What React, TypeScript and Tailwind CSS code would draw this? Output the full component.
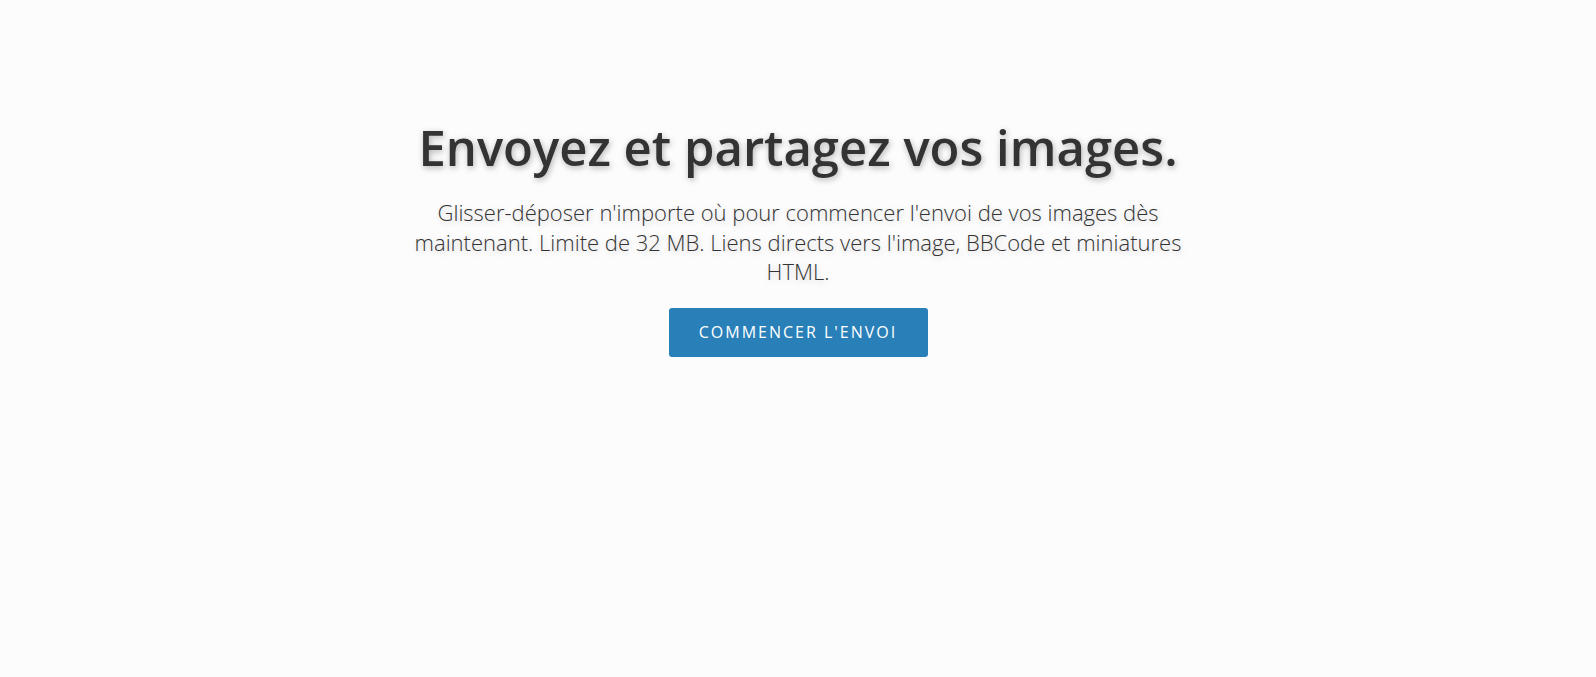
export default function App() {
  return (
    <div className="min-h-[677px] w-full bg-[#fcfcfc] font-['Open_Sans',sans-serif] text-[#333]">
      <div className="flex flex-col items-center pt-[118px] text-center">
        <h1 className="text-[49px] font-semibold leading-[58px] [text-shadow:1px_2px_6px_rgba(0,0,0,0.3)]">
          Envoyez et partagez vos images.
        </h1>
        <p className="mt-[22px] max-w-[790px] text-[22px] font-light leading-[29.5px] [text-shadow:1px_2px_6px_rgba(0,0,0,0.2)]">
          Glisser-déposer n'importe où pour commencer l'envoi de vos images dès maintenant. Limite de 32 MB. Liens directs vers l'image, BBCode et miniatures HTML.
        </p>
        <button className="mt-[21px] h-[49px] w-[259px] rounded-[3px] bg-[#2980b9] text-[16px] uppercase tracking-[2px] text-white">
          Commencer l'envoi
        </button>
      </div>
    </div>
  );
}
